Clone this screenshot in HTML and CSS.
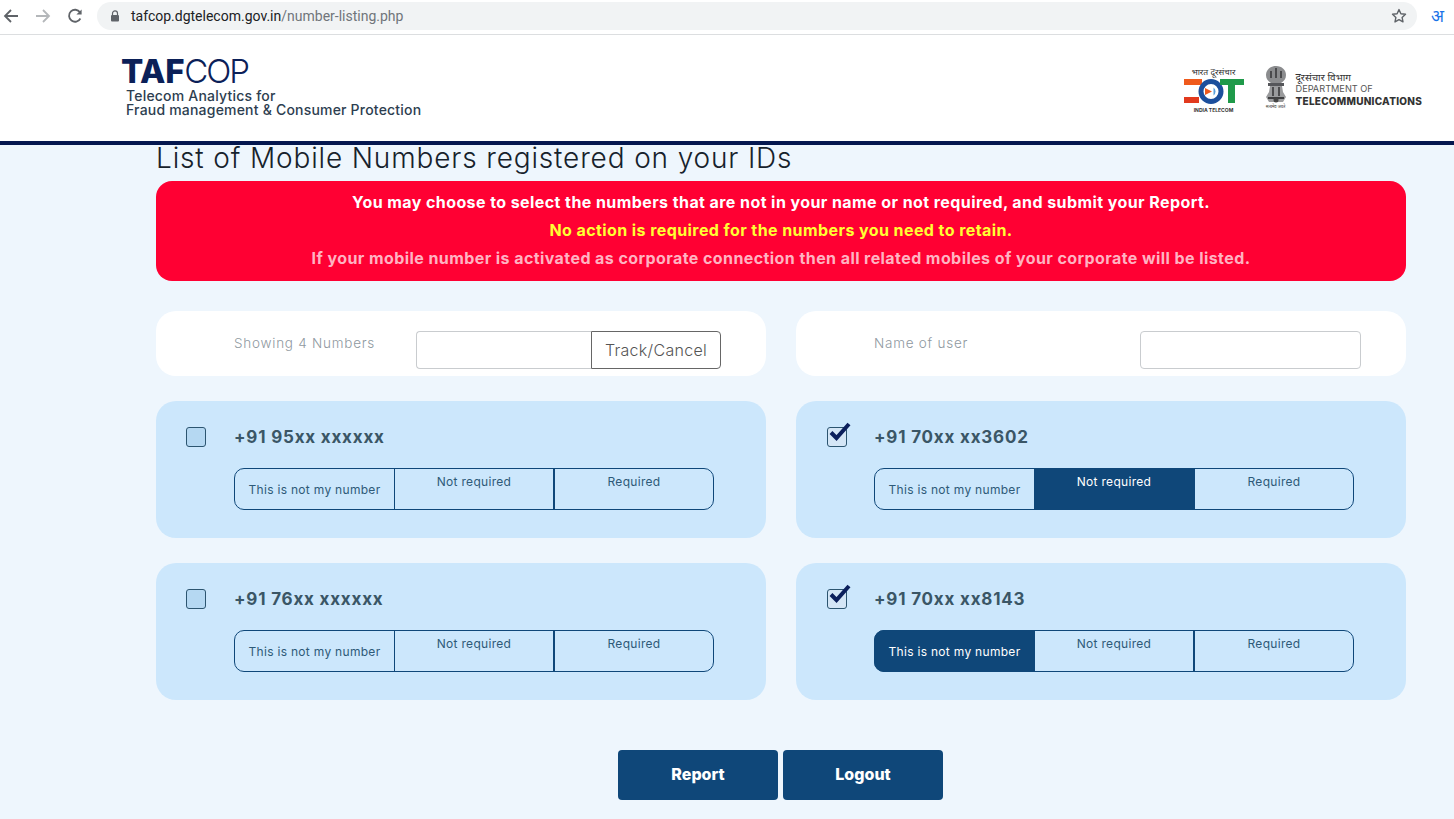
FILE: index.html
```html
<!DOCTYPE html>
<html lang="en">
<head>
<meta charset="utf-8">
<title>TAFCOP</title>
<link rel="stylesheet" href="styles.css">
</head>
<body>
<div class="toolbar">
  <svg class="nav-icon" viewBox="0 0 16 16"><path d="M15 8H2M8 2 2 8l6 6" fill="none" stroke="#5f6368" stroke-width="1.8"/></svg>
  <svg class="nav-icon" viewBox="0 0 16 16"><path d="M1 8h13M8 2l6 6-6 6" fill="none" stroke="#b4b7ba" stroke-width="1.8"/></svg>
  <svg class="nav-icon" viewBox="0 0 16 16"><path d="M13.4 10.5A6 6 0 1 1 13 4.3" fill="none" stroke="#5f6368" stroke-width="1.8"/><path d="M14.6 1.4v5.2H9.4z" fill="#5f6368"/></svg>
  <div class="omnibox">
    <svg class="lock" viewBox="0 0 10 12"><path d="M2.5 5V3.4a2.5 2.5 0 0 1 5 0V5" fill="none" stroke="#5f6368" stroke-width="1.2"/><rect x="1" y="5" width="8" height="6.5" rx="1" fill="#5f6368"/></svg>
    <span class="url">tafcop.dgtelecom.gov.in<span class="url-path">/number-listing.php</span></span>
    <svg class="star" viewBox="0 0 16 16"><path d="m8 1.6 1.9 4.2 4.6.5-3.4 3.1.9 4.5L8 11.6l-4 2.3.9-4.5L1.500 6.300l4.600-.5z" fill="none" stroke="#5f6368" stroke-width="1.4" stroke-linejoin="round"/></svg>
  </div>
  <span class="translate">अ</span>
</div>

<header class="site-header">
  <div class="brand">
    <div class="brand-name"><b>TAF</b><span class="brand-light">COP</span></div>
    <div class="brand-sub">Telecom Analytics for<br>Fraud management &amp; Consumer Protection</div>
  </div>
  <div class="partners">
    <div class="dot-logo">
      <span class="dot-hi">भारत दूरसंचार</span>
      <svg class="dot-mark" viewBox="0 0 60 25">
        <rect x="0" y="0" width="18" height="6" fill="#ef5a1c"/>
        <rect x="0" y="18" width="15" height="6" fill="#e23a1e"/>
        <circle cx="27" cy="12.500" r="10" fill="#fff" stroke="#1c4f9c" stroke-width="5"/>
        <path d="m21 9 7 3.500-7 3.500z" fill="#ef5a1c"/>
        <path d="M29.500 8.500a5 5 0 0 1 0 8z" fill="#5aa0dc"/>
        <rect x="36" y="0" width="24" height="6" fill="#1f9a4a"/>
        <rect x="44" y="0" width="7" height="24" fill="#1f9a4a"/>
      </svg>
      <span class="dot-en">INDIA TELECOM</span>
    </div>
    <div class="emblem-wrap">
      <svg class="emblem" viewBox="0 0 22 38">
        <path d="M11 0c6 0 10 4 10 9 0 4-2 6-5 8H6C3 15 1 13 1 9c0-5 4-9 10-9z" fill="#8b8c8e"/>
        <path d="M5 5h2v7H5zm5-3h2v10h-2zm5 3h2v7h-2z" fill="#4a4a4c"/>
        <path d="M3 17h16v3H3z" fill="#55565a"/>
        <path d="M5 20h12l1 6 3 5-3 5H4l-3-5 3-5z" fill="#9a9b9d"/>
        <path d="M7 21h2v9H7zm6 0h2v9h-2z" fill="#4c4c4e"/>
        <path d="M3 31h16v2H3z" fill="#3f3f41"/>
        <circle cx="11" cy="34" r="2.500" fill="#444"/>
      </svg>
      <span class="motto">सत्यमेव जयते</span>
    </div>
    <div class="dept">
      <span class="dept-hi">दूरसंचार विभाग</span>
      <span class="dept-mid">DEPARTMENT OF</span>
      <span class="dept-bold">TELECOMMUNICATIONS</span>
    </div>
  </div>
</header>

<main class="content">
  <h1 class="title">List of Mobile Numbers registered on your IDs</h1>
  <div class="alert">
    <p>You may choose to select the numbers that are not in your name or not required, and submit your Report.</p>
    <p class="alert-yellow">No action is required for the numbers you need to retain.</p>
    <p class="alert-pink">If your mobile number is activated as corporate connection then all related mobiles of your corporate will be listed.</p>
  </div>

  <div class="grid">
    <div class="search-card">
      <span class="search-label">Showing 4 Numbers</span>
      <div class="track">
        <input class="input input-track" type="text" aria-label="Track">
        <button class="track-btn">Track/Cancel</button>
      </div>
    </div>
    <div class="search-card">
      <span class="search-label">Name of user</span>
      <input class="input input-name" type="text" aria-label="Name of user">
    </div>

    <div class="num-card">
      <span class="check"></span>
      <div class="num-body">
        <div class="phone">+91 95xx xxxxxx</div>
        <div class="seg">
          <div class="seg-item seg-mid">This is not my number</div>
          <div class="seg-item">Not required</div>
          <div class="seg-item">Required</div>
        </div>
      </div>
    </div>
    <div class="num-card">
      <span class="check check-on"><svg class="tick" viewBox="0 0 24 22"><path d="M3 11.500 8.500 17 21 3" fill="none" stroke="#0b1f5c" stroke-width="4"/></svg></span>
      <div class="num-body">
        <div class="phone">+91 70xx xx3602</div>
        <div class="seg">
          <div class="seg-item seg-mid">This is not my number</div>
          <div class="seg-item seg-on">Not required</div>
          <div class="seg-item">Required</div>
        </div>
      </div>
    </div>
    <div class="num-card">
      <span class="check"></span>
      <div class="num-body">
        <div class="phone">+91 76xx xxxxxx</div>
        <div class="seg">
          <div class="seg-item seg-mid">This is not my number</div>
          <div class="seg-item">Not required</div>
          <div class="seg-item">Required</div>
        </div>
      </div>
    </div>
    <div class="num-card">
      <span class="check check-on"><svg class="tick" viewBox="0 0 24 22"><path d="M3 11.500 8.500 17 21 3" fill="none" stroke="#0b1f5c" stroke-width="4"/></svg></span>
      <div class="num-body">
        <div class="phone">+91 70xx xx8143</div>
        <div class="seg">
          <div class="seg-item seg-mid seg-on">This is not my number</div>
          <div class="seg-item">Not required</div>
          <div class="seg-item">Required</div>
        </div>
      </div>
    </div>
  </div>

  <div class="actions">
    <button class="action">Report</button>
    <button class="action">Logout</button>
  </div>
</main>
</body>
</html>
```
FILE: styles.css
```css
* { box-sizing: border-box; }
html, body { margin: 0; padding: 0; }
body {
  width: 1454px;
  height: 819px;
  overflow: hidden;
  background: #eef6fd;
  font-family: "Inter", "Noto Sans", "Noto Sans CJK SC", sans-serif;
}

.toolbar {
  height: 35px;
  background: #fff;
  border-bottom: 1px solid #dcdee0;
  display: flex;
  align-items: center;
  padding: 0 0 3px 3px;
}
.nav-icon { width: 16px; height: 16px; margin-right: 16px; flex: none; }
.omnibox {
  width: 1320px;
  height: 28px;
  margin-left: -2px;
  border-radius: 14px;
  background: #f1f3f4;
  display: flex;
  align-items: center;
  padding: 0 10px 0 13px;
}
.lock { width: 10px; height: 12px; margin-right: 11px; }
.url { font: 14px "Roboto", sans-serif; color: #202124; flex: 1; }
.url-path { color: #70757a; }
.star { width: 16px; height: 16px; }
.translate { margin-left: 14px; font: 400 17px/20px "Noto Sans", sans-serif; color: #1a73e8; }

.site-header {
  height: 110px;
  background: #fff;
  border-bottom: 4px solid #04174f;
  display: flex;
  justify-content: space-between;
  padding: 20px 32px 0 121px;
}
.brand-name { font: 300 33px/33px "Inter", sans-serif; color: #0b2058; }
.brand-name b { font-weight: 800; letter-spacing: -0.3px; }
.brand-light { letter-spacing: -2px; }
.brand-sub { margin: 1px 0 0 5px; font: 500 14px/14px "Inter", sans-serif; letter-spacing: .2px; color: #2d3e50; }
.partners { display: flex; align-items: flex-start; padding-top: 12px; }
.dot-logo { width: 60px; display: flex; flex-direction: column; align-items: center; margin-right: 20px; }
.dot-hi { font-size: 8.500px; line-height: 10px; color: #333; white-space: nowrap; }
.dot-mark { width: 60px; height: 25px; margin-top: 2px; }
.dot-en { font: 700 5px/8px "Inter", sans-serif; color: #333; margin-top: 2px; white-space: nowrap; }
.emblem-wrap { width: 24px; display: flex; flex-direction: column; align-items: center; margin-right: 8px; margin-top: -1px; }
.emblem { width: 22px; height: 38px; }
.motto { font-size: 4px; line-height: 6px; color: #333; white-space: nowrap; }
.dept { display: flex; flex-direction: column; padding-top: 4px; }
.dept-hi { font-size: 10px; line-height: 12px; color: #333; }
.dept-mid { font: 400 9.200px/12px "Inter", sans-serif; color: #555; }
.dept-bold { font: 800 10px/12px "Inter", sans-serif; color: #333; letter-spacing: .25px; }

.content { padding: 0 48px 0 156px; }
.title {
  margin: 0;
  height: 36px;
  font: 300 28px/27px "Inter", sans-serif;
  letter-spacing: .85px;
  color: #16222c;
}
.alert {
  height: 100px;
  border-radius: 16px;
  background: #ff0033;
  padding-top: 7px;
  text-align: center;
  font: 700 16px/28px "Inter", sans-serif;
  letter-spacing: .42px;
  color: #fff;
}
.alert p { margin: 0; }
.alert-yellow { color: #ffff33; }
.alert-pink { color: #ffb3c2; }

.grid {
  display: grid;
  grid-template-columns: 610px 610px;
  column-gap: 30px;
  row-gap: 25px;
  grid-template-rows: 65px 137px 137px;
  margin-top: 30px;
}
.search-card {
  background: #fff;
  border-radius: 20px;
  display: flex;
  justify-content: space-between;
  padding: 20px 45px 0 78px;
}
.search-label { font-size: 13.500px; font-weight: 300; line-height: 24px; letter-spacing: .75px; color: #8f999f; }
.track { display: flex; height: 38px; }
.input {
  height: 38px;
  background: #fff;
  border: 1px solid #c9cccf;
  border-radius: 4px;
  padding: 0;
  outline: none;
}
.input-track { width: 175px; border-radius: 4px 0 0 4px; border-right: 0; }
.input-name { width: 221px; }
.track-btn {
  width: 130px;
  height: 38px;
  padding: 0;
  background: #fff;
  border: 1px solid #666;
  border-radius: 0 4px 4px 0;
  font: 300 16px "Inter", sans-serif;
  letter-spacing: .3px;
  color: #555;
}

.num-card {
  background: #cce7fc;
  border-radius: 20px;
  display: flex;
  align-items: flex-start;
  padding: 26px 0 0 30px;
}
.check {
  position: relative;
  width: 20px;
  height: 20px;
  flex: none;
  border: 1.500px solid #2c5570;
  border-radius: 3px;
  background: #b5d8f2;
}
.check-on { background: #d4e6f6; margin-left: 1px; margin-right: -1px; }
.tick { position: absolute; left: 0; top: -7px; width: 24px; height: 22px; }
.num-body { margin-left: 28px; }
.phone {
  height: 41px;
  font: 700 17px/20px "Inter", sans-serif;
  letter-spacing: .8px;
  color: #3a5666;
}
.seg {
  width: 480px;
  height: 42px;
  border: 1px solid #0f4779;
  border-radius: 10px;
  display: grid;
  grid-template-columns: 160px 160px 1fr;
  font-size: 12px;
  letter-spacing: .3px;
  color: #2e5a78;
}
.seg-item {
  padding-top: 5px;
  line-height: 16px;
  text-align: center;
  border-right: 1px solid #0f4779;
}
.seg-item:nth-child(2) { border-right-width: 2px; }
.seg-item:last-child { border-right: 0; }
.seg-mid { padding-top: 13px; }
.seg-on { background: #0f4779; color: #fff; margin: -1px 0; padding-top: 6px; }
.seg-mid.seg-on {
  margin: -1px 0 -1px -1px;
  padding: 14px 0 0 1px;
  border-radius: 10px 0 0 10px;
}

.actions {
  display: flex;
  justify-content: center;
  gap: 5px;
  margin-top: 50px;
  padding-right: 1px;
}
.action {
  width: 160px;
  height: 50px;
  border: 0;
  border-radius: 4px;
  padding: 0 0 2px;
  background: #0f4779;
  color: #fff;
  font: 800 16px "Inter", sans-serif;
}
```
